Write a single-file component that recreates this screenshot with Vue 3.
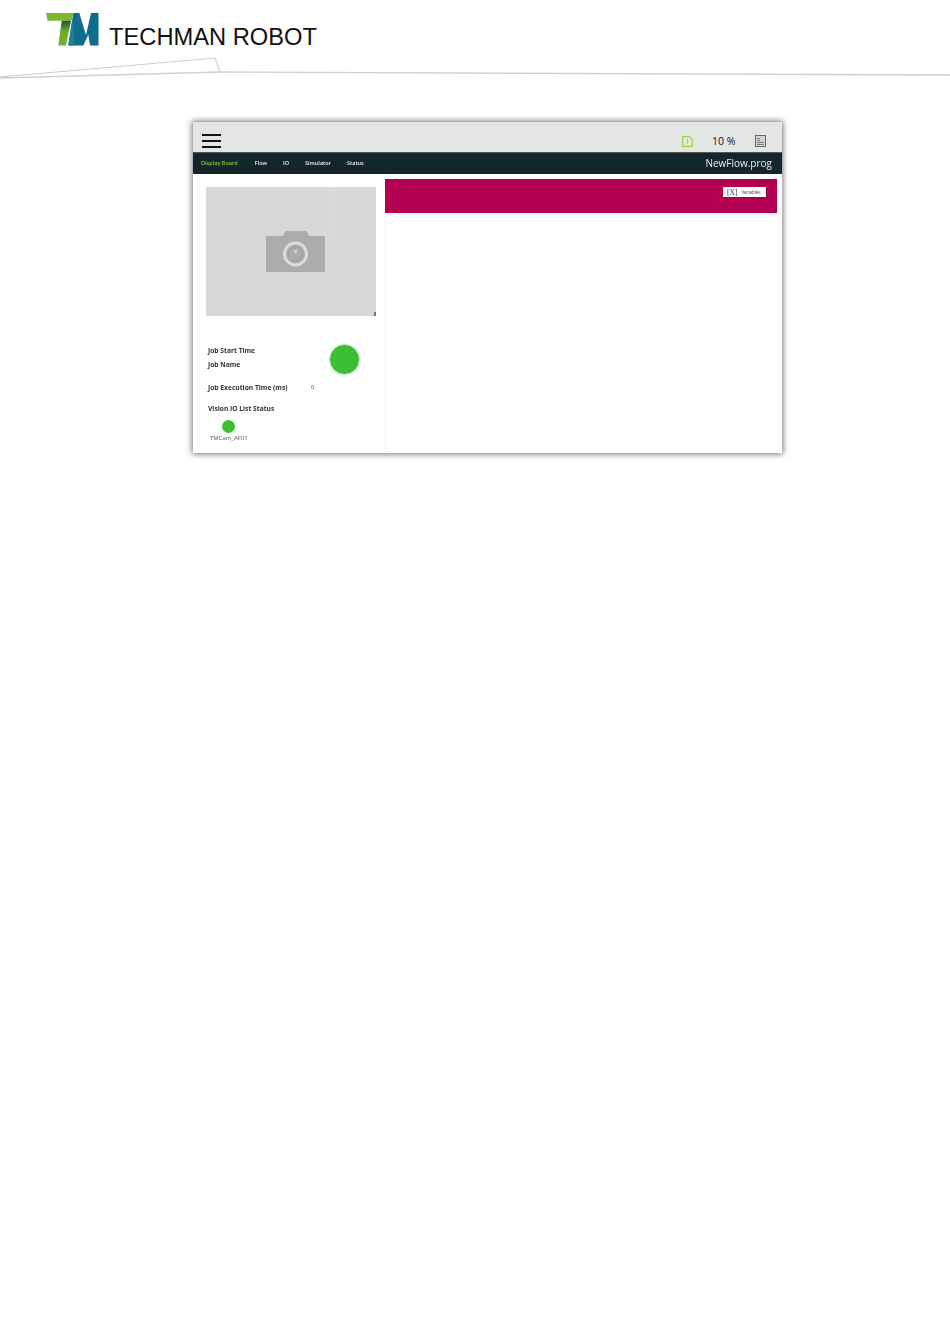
<template>
  <div class="page">
    <header class="doc-head">
      <div class="brand">
        <svg class="tm-logo" width="53" height="33" viewBox="0 0 53 33">
          <defs>
            <linearGradient id="stem" x1="0" y1="0" x2="0" y2="1">
              <stop offset="0" stop-color="#24512c" />
              <stop offset="0.45" stop-color="#6fb02b" />
            </linearGradient>
          </defs>
          <path d="M0 0H27.500L25.500 7.700H1.500Z" fill="#7ab82e" />
          <path d="M15.700 7.700H25L20 32.500H12.300Z" fill="url(#stem)" />
          <path d="M27.500 0H33.300L40 22L45 0H52.500V32.500H44L42.300 21.700L37.300 32.500H22.300L26 8Z" fill="#0e6d8c" />
          <path d="M26 8L22.300 32.500H29L27.500 14Z" fill="#1c7f9d" />
        </svg>
        <span class="brand-name">TECHMAN ROBOT</span>
      </div>
      <svg class="swoosh" width="950" height="24" viewBox="0 0 950 24">
        <path d="M0 20L215 1L220 15" fill="none" stroke="#cccccc" />
        <path d="M0 21L220 15L950 18" fill="none" stroke="#d0d0d0" stroke-width="1.400" />
      </svg>
    </header>

    <section class="shot">
      <div class="topbar">
        <div class="burger"><i /><i /><i /></div>
        <div class="top-right">
          <svg class="mode" width="11" height="11" viewBox="0 0 11 11">
            <path d="M0.700 0.700H7.500L10.300 3.500V10.300H0.700Z" fill="none" stroke="#9bd63c" stroke-width="1.200" />
            <path d="M5.500 3V8" stroke="#9bd63c" />
          </svg>
          <span class="speed">10 %</span>
          <svg class="log" width="11" height="12" viewBox="0 0 11 12">
            <rect x="0.500" y="0.500" width="10" height="11" fill="#d4d6d6" stroke="#666" />
            <path d="M2 3.500H5M2 5.500H5M2 7.500H9M2 9.500H9" stroke="#666" stroke-width="0.800" />
          </svg>
        </div>
      </div>

      <nav class="tabs">
        <a v-for="t in tabs" :key="t" class="tab" :class="{ active: t === 'Display Board' }">{{ t }}</a>
        <span class="file">NewFlow.prog</span>
      </nav>

      <div class="board">
        <aside class="left">
          <div class="camera">
            <svg width="59" height="41" viewBox="0 0 59 41">
              <path d="M0 5H17L19 1Q19.500 0 21 0H39Q40.500 0 41 1L43 5H59V41H0Z" fill="#acacac" />
              <circle cx="29.500" cy="23" r="12.500" fill="#dcdcdc" />
              <circle cx="29.500" cy="23" r="9.500" fill="#acacac" />
              <circle cx="29.500" cy="23" r="7" fill="none" stroke="#9a9a9a" />
              <circle cx="29.500" cy="20.500" r="1.800" fill="#cfcfcf" />
            </svg>
            <i class="corner" />
          </div>

          <div class="job">
            <div class="job-top">
              <div class="job-labels">
                <div class="label">Job Start Time</div>
                <div class="label">Job Name</div>
              </div>
              <div class="lamp big" />
            </div>
            <div class="exec">
              <span class="label">Job Execution Time (ms)</span>
              <span class="val">0</span>
            </div>
            <div class="label io-title">Vision IO List Status</div>
            <div class="io">
              <div class="lamp small" />
              <div class="io-name">TMCam_AF01</div>
            </div>
          </div>
        </aside>

        <main class="right">
          <div class="banner">
            <button class="var-btn"><b>[X]</b><span>Variables</span></button>
          </div>
        </main>
      </div>
    </section>
  </div>
</template>

<script setup>
const tabs = ['Display Board', 'Flow', 'IO', 'Simulator', 'Status']
</script>

<style>
html,
body {
  background: #fff;
}
</style>

<style scoped>
.page {
  height: 1344px;
  overflow: hidden;
  background: #fff;
  font-family: "Open Sans", "Liberation Sans", sans-serif;
}

.doc-head {
  height: 122px;
}

.brand {
  display: flex;
  align-items: flex-end;
  height: 46px;
  padding: 0 0 0 46px;
}

.tm-logo {
  display: block;
  flex: none;
}

.brand-name {
  margin: 0 0 -1px 10px;
  font-family: "Liberation Sans", Arial, sans-serif;
  font-size: 23.7px;
  line-height: 20px;
  color: #111;
}

.swoosh {
  display: block;
  margin-top: 11px;
}

/* the original is a scaled raster, hence the slight softening */
.shot {
  width: 589px;
  height: 331px;
  margin-left: 193px;
  background: #fff;
  box-shadow: 0 0 6px 1px rgba(0, 0, 0, 0.55);
  filter: blur(0.45px);
}

.topbar {
  display: flex;
  align-items: center;
  justify-content: space-between;
  height: 30px;
  padding: 0 16px 0 9px;
  background: #e4e6e6;
}

.burger {
  display: flex;
  flex-direction: column;
  gap: 4px;
  margin-top: 8px;
}

.burger i {
  display: block;
  width: 19px;
  height: 2px;
  background: #151515;
}

.top-right {
  display: flex;
  align-items: center;
  margin-top: 8px;
}

.speed {
  width: 25px;
  margin: 0 18px 0 19px;
  font-size: 10.5px;
  color: #111;
  white-space: nowrap;
}

.tabs {
  display: flex;
  align-items: center;
  height: 22px;
  padding: 0 10px 2px 8px;
  background: #13262e;
  border-top: 1px solid #555;
  box-sizing: border-box;
}

.tab {
  margin-right: 16px;
  font-size: 5.5px;
  font-weight: 600;
  color: #eee;
}

.tab.active {
  margin-right: 17px;
  color: #7fce22;
}

.file {
  margin-left: auto;
  font-size: 10px;
  color: #e8ecec;
}

.board {
  display: flex;
  height: 279px;
}

.left {
  box-sizing: border-box;
  width: 192px;
  padding: 13px 0 0 13px;
}

.camera {
  position: relative;
  display: flex;
  align-items: center;
  justify-content: center;
  width: 170px;
  height: 129px;
  background: #d8d8d8;
}

.camera::before {
  content: "";
  position: absolute;
  top: 0;
  right: 30px;
  width: 32px;
  height: 55px;
  background: repeating-linear-gradient(90deg, #dadad8 0 2px, #d8d8d8 2px 5px);
}

.camera svg {
  position: relative;
  margin: -1px 0 0 8px;
}

.corner {
  position: absolute;
  right: 0;
  bottom: 0;
  width: 2px;
  height: 4px;
  background: #777;
}

.job {
  padding: 30px 0 0 2px;
}

.job-top {
  display: flex;
}

.job-labels {
  width: 121px;
}

.label {
  font-size: 6.7px;
  line-height: 9px;
  font-weight: 700;
  color: #333;
}

.job-labels .label + .label {
  margin-top: 5px;
}

.lamp {
  border-radius: 50%;
  background: #3cbf32;
}

.lamp.big {
  width: 29px;
  height: 29px;
  margin-top: -2px;
  border: 1px solid #c9efc4;
}

.exec {
  display: flex;
  margin-top: 8px;
}

.exec .label {
  width: 103px;
}

.val {
  font-size: 5.5px;
  line-height: 9px;
  color: #333;
}

.io-title {
  margin-top: 12px;
}

.io {
  margin: 7px 0 0 2px;
}

.lamp.small {
  width: 13px;
  height: 13px;
  margin-left: 12px;
}

.io-name {
  margin-top: 1px;
  font-size: 6px;
  line-height: 8px;
  color: #555;
}

.right {
  flex: 1;
  padding: 5px 5px 0 0;
  border-left: 1px solid #f1f3e4;
}

.banner {
  display: flex;
  align-items: flex-start;
  justify-content: flex-end;
  height: 34px;
  margin-left: -1px;
  padding: 8px 11px 0 0;
  box-sizing: border-box;
  background: #b30050;
}

.var-btn {
  display: flex;
  align-items: center;
  gap: 4px;
  width: 43px;
  height: 10px;
  padding: 0 0 0 4px;
  border: 0;
  background: #fff;
  box-shadow: 1px 1px 0 #7a0f3c;
  color: #333;
  font-family: inherit;
}

.var-btn b {
  font-family: "Liberation Serif", serif;
  font-size: 7.5px;
  font-weight: 400;
}

.var-btn span {
  font-size: 4.5px;
}
</style>
